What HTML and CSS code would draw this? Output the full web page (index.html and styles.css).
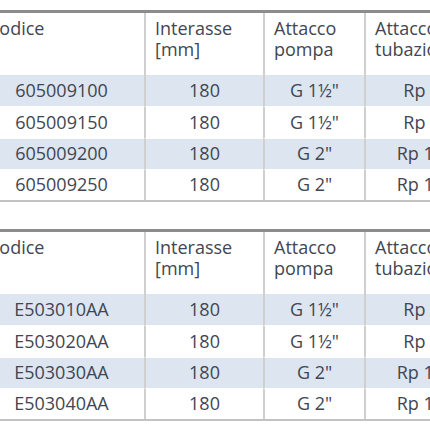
FILE: index.html
```html
<!DOCTYPE html>
<html lang="it">
<head>
<meta charset="utf-8">
<link rel="stylesheet" href="styles.css">
</head>
<body>
<div class="page">
  <table class="spec">
    <colgroup><col class="c1"><col class="c2"><col class="c3"><col class="c4"></colgroup>
    <thead>
      <tr><th>Codice</th><th>Interasse<br>[mm]</th><th>Attacco<br>pompa</th><th>Attacco<br>tubazione</th></tr>
    </thead>
    <tbody>
      <tr class="alt"><td>605009100</td><td>180</td><td>G 1½"</td><td>Rp 1"</td></tr>
      <tr><td>605009150</td><td>180</td><td>G 1½"</td><td>Rp 1"</td></tr>
      <tr class="alt"><td>605009200</td><td>180</td><td>G 2"</td><td>Rp 1¼"</td></tr>
      <tr><td>605009250</td><td>180</td><td>G 2"</td><td>Rp 1¼"</td></tr>
    </tbody>
  </table>
  <table class="spec">
    <colgroup><col class="c1"><col class="c2"><col class="c3"><col class="c4"></colgroup>
    <thead>
      <tr><th>Codice</th><th>Interasse<br>[mm]</th><th>Attacco<br>pompa</th><th>Attacco<br>tubazione</th></tr>
    </thead>
    <tbody>
      <tr class="alt"><td>E503010AA</td><td>180</td><td>G 1½"</td><td>Rp 1"</td></tr>
      <tr><td>E503020AA</td><td>180</td><td>G 1½"</td><td>Rp 1"</td></tr>
      <tr class="alt"><td>E503030AA</td><td>180</td><td>G 2"</td><td>Rp 1¼"</td></tr>
      <tr><td>E503040AA</td><td>180</td><td>G 2"</td><td>Rp 1¼"</td></tr>
    </tbody>
  </table>
</div>
</body>
</html>
```
FILE: styles.css
```css
html, body {
  margin: 0;
  padding: 0;
  background: #fff;
  overflow: hidden;
}
.page {
  margin-left: -21px;
  padding-top: 10px;
  display: flex;
  flex-direction: column;
  gap: 27px;
  width: 520px;
}
.spec {
  table-layout: fixed;
  border-collapse: separate;
  border-spacing: 0;
  width: 506px;
  border-top: 3px solid #8c8c8c;
  border-bottom: 2px solid #c2c2c2;
  font-family: "Open Sans", Lato, sans-serif;
  font-size: 18px;
  color: #414652;
}
.c1 { width: 165px; }
.c2 { width: 119px; }
.c3 { width: 101px; }
.c4 { width: 121px; }
.spec th {
  height: 62px;
  box-sizing: border-box;
  padding: 5px 0 0 9px;
  text-align: left;
  vertical-align: top;
  font-weight: 400;
  line-height: 21px;
  white-space: nowrap;
}
.spec td {
  height: 31.25px;
  box-sizing: border-box;
  padding: 0;
  text-align: center;
  vertical-align: middle;
  line-height: 21px;
  white-space: nowrap;
}
.spec th + th,
.spec td + td {
  border-left: 2px solid #cfcfcf;
}
.spec tbody tr.alt td {
  background: #dce5f0;
}
.spec tbody td {
  border-top: 1px solid #fff;
}
.spec tbody tr:first-child td {
  border-top: 0;
}
```
